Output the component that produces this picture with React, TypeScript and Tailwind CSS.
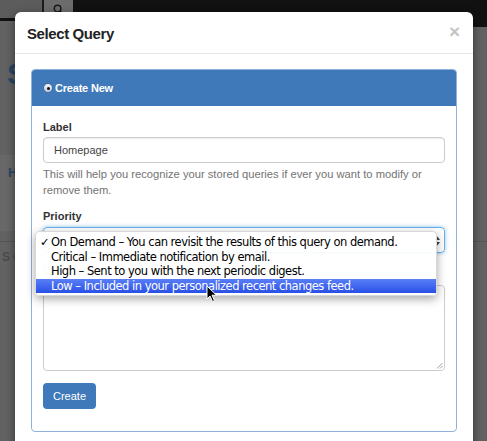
import React from "react";

const options = [
  "On Demand – You can revisit the results of this query on demand.",
  "Critical – Immediate notification by email.",
  "High – Sent to you with the next periodic digest.",
  "Low – Included in your personalized recent changes feed.",
];

function SearchIcon() {
  return (
    <svg width="11" height="11" viewBox="0 0 12 12" fill="none" stroke="#1a1a1a" strokeWidth="1.6">
      <circle cx="5" cy="5" r="3.6" />
      <path d="M7.7 7.7 L11 11" strokeLinecap="round" />
    </svg>
  );
}

function Cursor() {
  return (
    <svg width="12" height="18" viewBox="0 0 12 18">
      <path d="M1 1 L1 14 L4 11 L6.5 16.5 L8.5 15.6 L6 10.2 L10.5 10.2 Z" fill="#000" stroke="#fff" strokeWidth="1" strokeLinejoin="round" />
    </svg>
  );
}

export default function App() {
  return (
    <div className="relative w-[487px] h-[441px] overflow-hidden bg-[#626262] font-['Liberation_Sans',Arial,sans-serif]">
      {/* dimmed page behind */}
      <div className="flex h-[21px] bg-[#111]">
        <div className="w-[42px] h-[18px] bg-[#5c5c5c]" />
        <div className="w-[31px] h-[18px] bg-[#6c6c6c] border-l-2 border-[#1c1c1c] flex items-center justify-center">
          <SearchIcon />
        </div>
      </div>
      <div className="absolute right-0 top-[21px] w-[14px] h-[6px] bg-[#111]" />
      <div className="pl-[7px] pt-[36px] text-[30px] font-bold leading-[34px] text-[#2b4566]">S</div>
      <div className="mt-[64px] h-[76px] w-[16px] bg-[#686868] pl-[8px] pt-[8px] text-[13px] font-bold text-[#2b4566]">H</div>
      <div className="mt-[10px] border-t border-[#555] pt-[6px] pl-[2px] text-[12px] font-bold text-[#4a4a4a]">S G</div>

      {/* modal */}
      <div className="absolute left-[15px] top-[12px] w-[458px] h-[440px] bg-white rounded-[6px] shadow-[0_3px_9px_rgba(0,0,0,0.5)]">
        <div className="flex items-center justify-between h-[42px] px-[12px] border-b border-[#e5e5e5]">
          <div className="text-[15px] leading-[20px] text-[#222] font-bold tracking-[-0.4px] pt-[2px]">Select Query</div>
          <div className="text-[19px] font-bold leading-none text-[#c4c4c4] pr-[1px] -mt-[2px]">×</div>
        </div>
        <div className="px-[16px] pt-[15px]">
          <div className="border border-[#8eb0dc] rounded-[4px]">
            <div className="h-[36px] bg-[#3f79b9] rounded-t-[3px] flex items-center pl-[11px] gap-[2px]">
              <div className="w-[10px] h-[10px] rounded-full bg-gradient-to-b from-[#f4f7fb] to-[#b9c9e3] border border-[#4d6d99] flex items-center justify-center">
                <div className="w-[3px] h-[3px] rounded-full bg-[#111]" />
              </div>
              <div className="text-[11px] font-bold text-white tracking-[-0.2px]">Create New</div>
            </div>
            <div className="px-[11px] pt-[13px] pb-[22px] text-[11px] text-[#333]">
              <div className="font-bold leading-[17px]">Label</div>
              <div className="mt-[1px] h-[26px] border border-[#ccc] rounded-[4px] flex items-center pl-[10px] text-[#444] shadow-[inset_0_1px_1px_rgba(0,0,0,0.075)]">
                Homepage
              </div>
              <div className="pt-[4px] leading-[15.5px] text-[#737373] text-[11.2px]">
                This will help you recognize your stored queries if ever you want to modify or remove them.
              </div>
              <div className="mt-[10px] font-bold leading-[17px]">Priority</div>
              <div className="relative mt-[2px] h-[26px] border border-[#66afe9] rounded-[4px] shadow-[0_0_4px_rgba(102,175,233,0.7)]">
                <svg className="absolute right-[4px] top-[8px]" width="5" height="10" viewBox="0 0 5 10">
                  <path d="M0 4 L2.5 0.5 L5 4 Z M0 6 L2.5 9.5 L5 6 Z" fill="#444" />
                </svg>
              </div>
              <div className="mt-[9px] font-bold leading-[17px] text-[#aaa]">Description</div>
              <div className="relative mt-[6px] h-[86px] border border-[#ccc] rounded-[4px]">
                <svg className="absolute right-[1px] bottom-[1px]" width="7" height="7" viewBox="0 0 7 7">
                  <path d="M6.5 1 L1 6.5 M6.5 4 L4 6.5" stroke="#888" strokeWidth="0.8" />
                </svg>
              </div>
              <div className="mt-[12px] w-[53px] h-[26px] bg-[#3f79b9] rounded-[4px] flex items-center justify-center text-white">
                Create
              </div>
            </div>
          </div>
        </div>
      </div>

      {/* native select popup */}
      <div className="absolute left-[35px] top-[231px] w-[402px] h-[65px] bg-white/95 rounded-[4px] shadow-[0_3px_10px_rgba(0,0,0,0.35)] border border-[#d8d8d8] pt-[3px] font-['DejaVu_Sans',sans-serif] text-[11.5px] text-black">
        {options.map((o, i) => (
          <div
            key={o}
            className={
              i === 3
                ? "h-[14.5px] leading-[14.5px] flex bg-gradient-to-b from-[#5a7ef6] to-[#2a4fe6] text-white"
                : "h-[14.5px] leading-[14.5px] flex"
            }
          >
            <span className="w-[15px] pl-[4px]">{i === 0 ? "✓" : ""}</span>
            <span className="tracking-[-0.5px]">{o}</span>
          </div>
        ))}
      </div>
      <div className="absolute left-[206px] top-[285px]">
        <Cursor />
      </div>
    </div>
  );
}
